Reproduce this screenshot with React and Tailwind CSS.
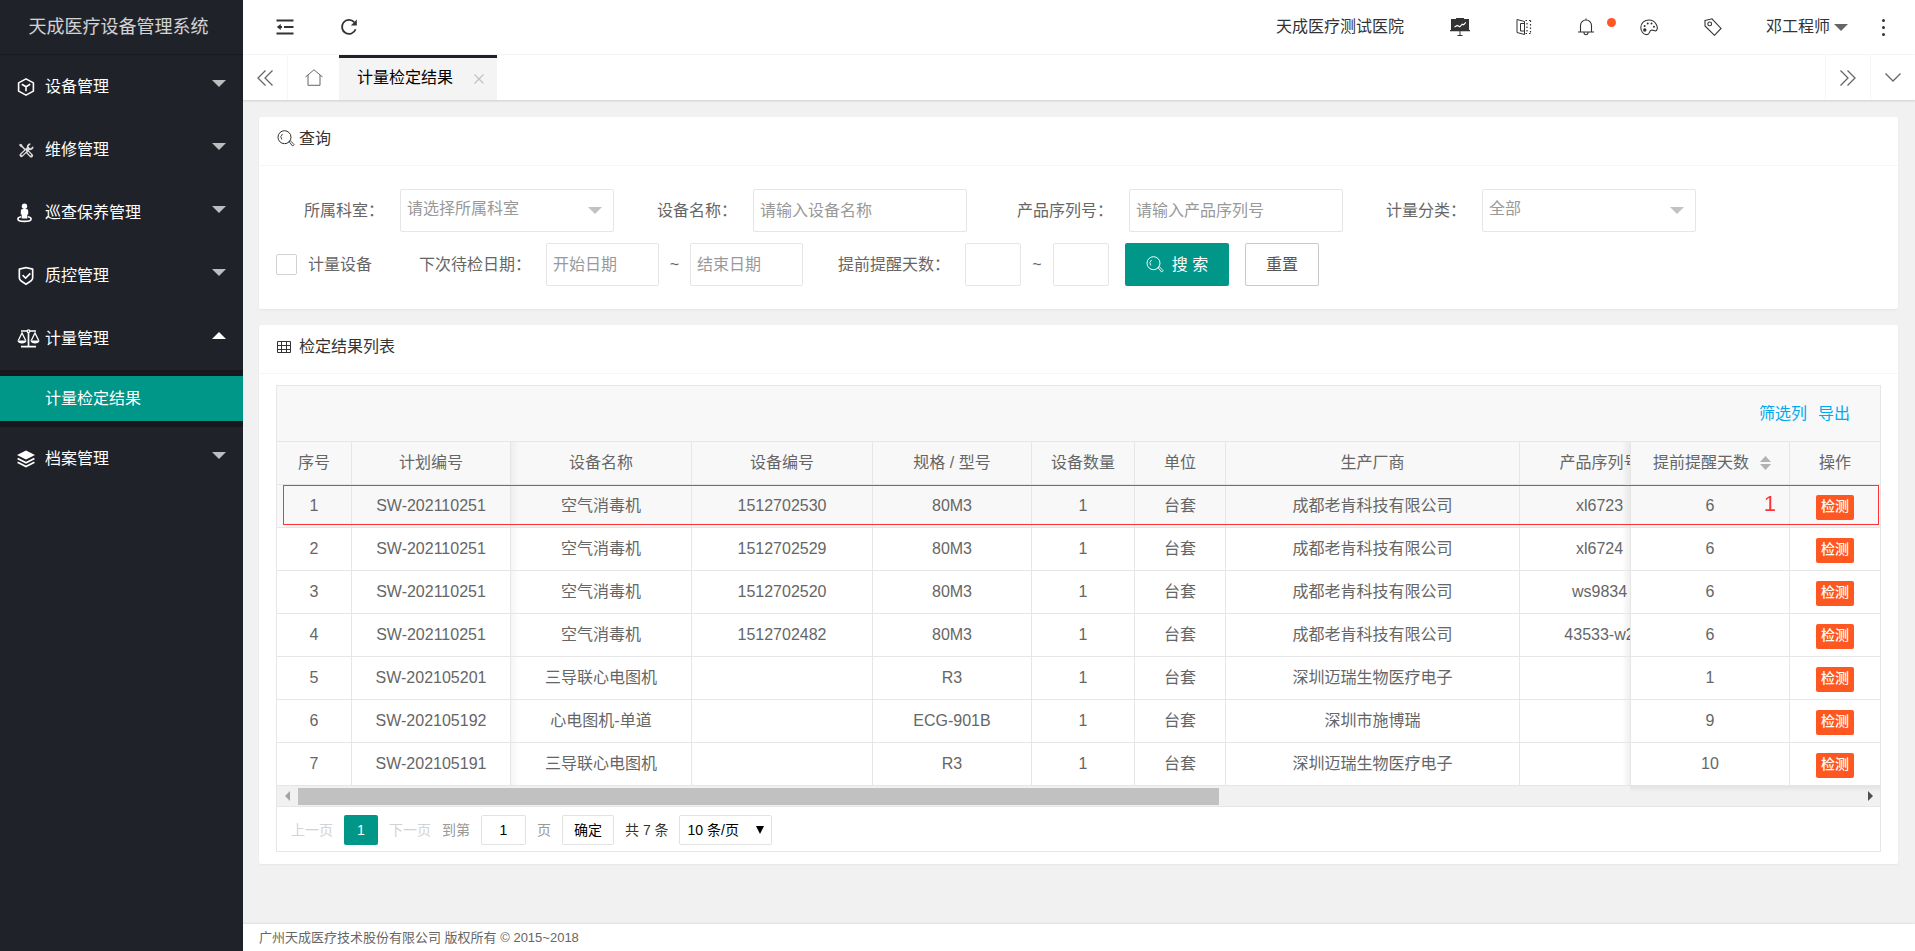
import { useState } from "react";
import clsx from "clsx";
import { RiShieldCheckLine } from "react-icons/ri";

const MENUS = [
  { title: "设备管理", icon: CubeIcon },
  { title: "维修管理", icon: ToolsIcon },
  { title: "巡查保养管理", icon: PatrolIcon },
  { title: "质控管理", icon: ShieldIcon },
  { title: "计量管理", icon: ScaleIcon, children: ["计量检定结果"] },
  { title: "档案管理", icon: LayersIcon },
];

const ROWS = [
  { plan: "SW-202110251", name: "空气消毒机", code: "1512702530", model: "80M3", maker: "成都老肯科技有限公司", serial: "xl6723", days: 6 },
  { plan: "SW-202110251", name: "空气消毒机", code: "1512702529", model: "80M3", maker: "成都老肯科技有限公司", serial: "xl6724", days: 6 },
  { plan: "SW-202110251", name: "空气消毒机", code: "1512702520", model: "80M3", maker: "成都老肯科技有限公司", serial: "ws9834", days: 6 },
  { plan: "SW-202110251", name: "空气消毒机", code: "1512702482", model: "80M3", maker: "成都老肯科技有限公司", serial: "43533-w2", days: 6 },
  { plan: "SW-202105201", name: "三导联心电图机", code: "", model: "R3", maker: "深圳迈瑞生物医疗电子", serial: "", days: 1 },
  { plan: "SW-202105192", name: "心电图机-单道", code: "", model: "ECG-901B", maker: "深圳市施博瑞", serial: "", days: 9 },
  { plan: "SW-202105191", name: "三导联心电图机", code: "", model: "R3", maker: "深圳迈瑞生物医疗电子", serial: "", days: 10 },
];

/* ---------- icons ---------- */

function CubeIcon() {
  return (
    <svg width="18" height="18" viewBox="0 0 18 18" fill="none" stroke="currentColor" strokeWidth="1.6" strokeLinejoin="round">
      <path d="M9 .9 16.4 4.9v8.2L9 17.1 1.6 13.1V4.9z" />
      <path d="M4.8 6.3 9 8.8l4.2-2.5M9 8.800v4.400" />
    </svg>
  );
}

function ToolsIcon() {
  return (
    <svg width="18" height="18" viewBox="0 0 18 18" fill="none" stroke="#ddd">
      <path d="M3.4 3.900 8.500 9" strokeWidth="1.5" />
      <path d="M2.500 2.800 5 3.600 5.600 5.800 4.200 6.200 2.300 4.600z" fill="#ddd" stroke="none" />
      <path d="m10.600 11 3.600 3.600" strokeWidth="3.800" strokeLinecap="round" />
      <path d="m10.800 11.200 3.200 3.200" stroke="#20222A" strokeWidth="1.200" />
      <path d="m4.400 14.200 6.600-6.400" strokeWidth="3.800" strokeLinecap="round" />
      <path d="m4.600 14 4.400-4.200" stroke="#20222A" strokeWidth="1.200" />
      <path d="M13.300 3.200A2.600 2.600 0 0 0 11 7a2.600 2.600 0 0 0 4.800-1.200" strokeWidth="1.800" />
    </svg>
  );
}

function PatrolIcon() {
  return (
    <svg width="16" height="20" viewBox="0 0 16 20" fill="currentColor">
      <circle cx="7.500" cy="3.200" r="2.700" />
      <path d="M3.800 7.800Q3.800 6 5.600 6h3.800q1.800 0 1.800 1.800V11.500H10.300V15.500H4.700V11.500H3.800z" />
      <path d="M4.200 13.800C2 14.200.9 15 .9 15.900c0 1.500 3 2.500 6.600 2.500s6.600-1 6.600-2.500c0-.9-1.100-1.700-3.300-2.100" fill="none" stroke="currentColor" strokeWidth="1.600" />
    </svg>
  );
}

function ShieldIcon() {
  return <RiShieldCheckLine size={20} className="-mx-px" />;
}

function ScaleIcon() {
  return (
    <svg width="23" height="19" viewBox="0 0 23 19" fill="none" stroke="currentColor" strokeWidth="1.3">
      <path d="M4 2h15M11.500 2v15M4 17.600h15" strokeWidth="1.700" />
      <circle cx="11.500" cy="2.200" r="1.300" fill="#20222A" />
      <path d="M1.300 11.500 5 4l3.700 7.500M14.300 11.500 18 4l3.700 7.500" />
      <path d="M.4 11.500h9.200c-.3 2-2.200 3-4.600 3s-4.300-1-4.600-3zM13.400 11.500h9.200c-.3 2-2.200 3-4.600 3s-4.300-1-4.600-3z" fill="currentColor" stroke="none" />
    </svg>
  );
}

function LayersIcon() {
  return (
    <svg width="18" height="18" viewBox="0 0 18 18" fill="currentColor">
      <path d="M9 .6 18 5 9 9.500 0 5z" />
      <path d="m.6 8.500 8.400 4.200 8.400-4.200M.6 12.300 9 16.500l8.400-4.200" fill="none" stroke="currentColor" strokeWidth="1.800" />
    </svg>
  );
}

function FoldIcon() {
  return (
    <svg width="18" height="16" viewBox="0 0 18 16" fill="none" stroke="currentColor" strokeWidth="1.800">
      <path d="M.5 1.500h17M8 8h9.500M.5 14.500h17M2.500 8H6" />
      <path d="M.8 8l4-3v6z" fill="currentColor" stroke="none" />
    </svg>
  );
}

function RefreshIcon() {
  return (
    <svg width="18" height="18" viewBox="0 0 18 18" fill="none" stroke="currentColor" strokeWidth="1.800">
      <path d="M15.600 11.300A7 7 0 1 1 14.200 4.200" />
      <path d="M16.800 1.400v6h-6z" fill="currentColor" stroke="none" />
    </svg>
  );
}

function BoardIcon() {
  return (
    <svg width="20" height="18" viewBox="0 0 20 18" fill="currentColor">
      <path d="M6 0h8v1h5v11h1v1.200H0V12h1V1h5z" />
      <path d="M4.500 9 7.200 7.400l2.600 1.400 2.400-2.600 1.400.6 2.200-2.400" fill="none" stroke="#fff" strokeWidth="1.200" />
      <path d="M10 13v4.500M7.500 17.500h5" fill="none" stroke="currentColor" />
    </svg>
  );
}

function BookIcon() {
  return (
    <svg width="16" height="18" viewBox="0 0 16 18" fill="none" stroke="currentColor">
      <path d="M8.500 3.500 1 1.500v13l7.500 2zM8.500 5.500h-4v7.500h4" />
      <path d="M9.500 2.500h5.500M9.500 15.500h5.500M11 5v9M14.500 2.500v13" strokeDasharray="1.500 2" strokeWidth="1.200" />
    </svg>
  );
}

function BellIcon() {
  return (
    <svg width="16" height="18" viewBox="0 0 16 18" fill="none" stroke="currentColor" strokeWidth="1.100">
      <path d="M2.500 14V7.500a5.500 5.500 0 0 1 11 0V14M0 14h16M8 2V.500M6 14.500c0 3 4 3 4 0" />
    </svg>
  );
}

function PaletteIcon() {
  return (
    <svg width="18" height="17" viewBox="0 0 18 17" fill="none" stroke="currentColor" strokeWidth="1.100">
      <path d="M9 1C4.300 1 .8 4.300.8 8.400c0 4 2.600 7.200 5.900 7.200 3.400 0 2.200-3.300 4.400-4.300 2-.9 3.800 1.500 5.300.2C18.600 9.400 16.400 1 9 1z" />
      <g fill="currentColor" stroke="none">
        <circle cx="4.800" cy="11" r="1.700" />
        <circle cx="4.600" cy="6.900" r="1" />
        <circle cx="7.700" cy="4.400" r="1" />
        <circle cx="11.500" cy="4.500" r="1" />
        <circle cx="14" cy="7.700" r="1" />
      </g>
    </svg>
  );
}

function TagIcon() {
  return (
    <svg width="18" height="18" viewBox="0 0 18 18" fill="none" stroke="currentColor" strokeWidth="1.100">
      <path d="M1 2.500 8 .8l9 9.700-6.500 6.800L1 8z" />
      <circle cx="5.700" cy="5.900" r="1.900" />
    </svg>
  );
}

function SearchIcon() {
  return (
    <svg width="18" height="18" viewBox="0 0 18 18" fill="none" stroke="currentColor">
      <circle cx="7.500" cy="7.200" r="6.500" />
      <path d="M5.600 3.900a4 4 0 0 0-.8 5.600M12 11.600l1.200-1.100 3.900 4.100-1.400 1.500z" strokeWidth=".9" />
    </svg>
  );
}

function GridIcon() {
  return (
    <svg width="14" height="12" viewBox="0 0 14 12" fill="none" stroke="currentColor">
      <path d="M.5.5h13v11H.5zM0 4.500h14M0 8.500h14M4.500 0v12M9.500 0v12" />
    </svg>
  );
}

function DoubleChevron({ flip }) {
  return (
    <svg width="16" height="16" viewBox="0 0 16 16" fill="none" stroke="currentColor" strokeWidth="1.300" className={clsx(flip && "rotate-180")}>
      <path d="M8.500.5 1 8l7.500 7.500M15.500.5 8 8l7.500 7.500" />
    </svg>
  );
}

function Caret({ up, className }) {
  return (
    <svg width="14" height="7" viewBox="0 0 14 7" fill="currentColor" className={clsx(up && "rotate-180", className)}>
      <path d="M0 0h14L7 7z" />
    </svg>
  );
}

/* ---------- layout ---------- */

function Sidebar() {
  return (
    <aside className="w-[243px] shrink-0 bg-[#20222A] text-white">
      <div className="flex h-[55px] items-center justify-center border-b border-black/20 pr-1.5 text-lg text-white/80">
        天成医疗设备管理系统
      </div>
      <nav>
        {MENUS.map(({ title, icon: Icon, children }) => (
          <div key={title}>
            <button type="button" className="flex h-[63px] w-full items-center pl-[17px] pr-[17px] text-left">
              <span className="flex w-[28px] shrink-0">
                <Icon />
              </span>
              <span className="flex-1">{title}</span>
              <Caret up={!!children} className={clsx("mb-1.5", children ? "text-white" : "text-white/70")} />
            </button>
            {children && (
              <div className="bg-[#17181E] py-1.5">
                {children.map((child) => (
                  <a key={child} href="#" className="flex h-[45px] items-center bg-[#009688] pl-[45px]">
                    {child}
                  </a>
                ))}
              </div>
            )}
          </div>
        ))}
      </nav>
    </aside>
  );
}

function Header() {
  return (
    <header className="flex h-[55px] items-center justify-between border-b border-[#f6f6f6] bg-white pl-[33px] pr-[30px] text-[#333]">
      <div className="flex items-center gap-[46px]">
        <button type="button" aria-label="侧边伸缩"><FoldIcon /></button>
        <button type="button" aria-label="刷新"><RefreshIcon /></button>
      </div>
      <div className="flex items-center">
        <a href="#" className="mr-[46px]">天成医疗测试医院</a>
        <div className="mr-[44px] flex items-center gap-[46px]">
          <button type="button" aria-label="大屏"><BoardIcon /></button>
          <button type="button" aria-label="手册"><BookIcon /></button>
          <button type="button" aria-label="消息" className="relative">
            <BellIcon />
            <span className="absolute -right-[22px] top-0 size-[9px] rounded-full bg-[#FF5722]" />
          </button>
          <button type="button" aria-label="主题"><PaletteIcon /></button>
          <button type="button" aria-label="便签"><TagIcon /></button>
        </div>
        <button type="button" className="flex items-center gap-1">
          邓工程师
          <Caret className="text-[#666]" />
        </button>
        <button type="button" aria-label="更多" className="ml-[34px] flex flex-col gap-1">
          <span className="size-[3px] rounded-full bg-[#333]" />
          <span className="size-[3px] rounded-full bg-[#333]" />
          <span className="size-[3px] rounded-full bg-[#333]" />
        </button>
      </div>
    </header>
  );
}

function Tabs() {
  return (
    <div className="relative flex h-[45px] bg-white text-[#666] shadow-[0_1px_2px_rgba(0,0,0,0.15)]">
      <button type="button" aria-label="向左" className="flex w-[45px] items-center justify-center border-r border-[#f6f6f6]">
        <DoubleChevron />
      </button>
      <button type="button" aria-label="首页" className="flex w-[51px] items-center justify-center">
        <svg width="18" height="17" viewBox="0 0 18 17" fill="none" stroke="currentColor">
          <path d="M.5 8 9 .8 17.500 8M3 6v10.300h12V6" />
        </svg>
      </button>
      <div className="flex w-[158px] items-center border-t-[3px] border-[#20222A] bg-[#f4f4f4] pl-[18px] text-black">
        <span className="pb-0.5">计量检定结果</span>
        <button type="button" aria-label="关闭" className="ml-[21px] text-[#c2c2c2]">
          <svg width="10" height="10" viewBox="0 0 10 10" fill="none" stroke="currentColor" strokeWidth="1.200">
            <path d="m.5.5 9 9m0-9-9 9" />
          </svg>
        </button>
      </div>
      <button type="button" aria-label="向右" className="ml-auto flex w-[45px] items-center justify-center border-l border-[#f6f6f6]">
        <DoubleChevron flip />
      </button>
      <button type="button" aria-label="标签操作" className="flex w-[45px] items-center justify-center border-l border-[#f6f6f6]">
        <svg width="16" height="9" viewBox="0 0 16 9" fill="none" stroke="currentColor" strokeWidth="1.300">
          <path d="m.5.5 7.500 7.500L15.500.5" />
        </svg>
      </button>
    </div>
  );
}

function Card({ icon, title, children }) {
  return (
    <section className="rounded-xs bg-white shadow-[0_1px_2px_rgba(0,0,0,0.05)]">
      <h2 className="flex h-[49px] items-center border-b border-[#f6f6f6] px-[18px] pb-1 text-[#333]">
        <span className="flex w-[22px]">{icon}</span>
        {title}
      </h2>
      {children}
    </section>
  );
}

const INPUT = "h-[43px] rounded-xs border border-[#e6e6e6] bg-white px-[6px] text-[#666] placeholder:text-[#999] outline-none";

function SelectField({ id, options }) {
  return (
    <div className="relative w-[214px]">
      <select id={id} className={clsx(INPUT, "w-full appearance-none pb-1 text-[#999]")}>
        {options.map((o) => (
          <option key={o}>{o}</option>
        ))}
      </select>
      <Caret className="pointer-events-none absolute right-3 top-[18px] text-[#c2c2c2]" />
    </div>
  );
}

function SearchForm() {
  return (
    <form className="px-[17px] pb-[23px] pt-[23px]" onSubmit={(e) => e.preventDefault()}>
      <div className="flex flex-wrap items-center gap-y-[11px]">
        <label htmlFor="dept" className="w-[124px] pl-[28px]">所属科室：</label>
        <SelectField id="dept" options={["请选择所属科室"]} />
        <label htmlFor="name" className="w-[139px] pl-[43px]">设备名称：</label>
        <input id="name" placeholder="请输入设备名称" className={clsx(INPUT, "w-[214px]")} />
        <label htmlFor="serial" className="w-[162px] pl-[50px]">产品序列号：</label>
        <input id="serial" placeholder="请输入产品序列号" className={clsx(INPUT, "w-[214px]")} />
        <label htmlFor="kind" className="w-[139px] pl-[43px]">计量分类：</label>
        <SelectField id="kind" options={["全部"]} />
      </div>
      <div className="mt-[11px] flex flex-wrap items-center">
        <label className="flex items-center gap-[11px]">
          <input type="checkbox" className="size-[21px] appearance-none rounded-xs border border-[#d2d2d2] bg-white" />
          计量设备
        </label>
        <label htmlFor="from" className="w-[174px] pl-[47px]">下次待检日期：</label>
        <input id="from" placeholder="开始日期" className={clsx(INPUT, "w-[113px]")} />
        <span className="w-[31px] text-center">~</span>
        <input aria-label="结束日期" placeholder="结束日期" className={clsx(INPUT, "w-[113px]")} />
        <label htmlFor="min" className="w-[162px] pl-[35px]">提前提醒天数：</label>
        <input id="min" className={clsx(INPUT, "w-[56px]")} />
        <span className="w-[32px] text-center">~</span>
        <input aria-label="最大提醒天数" className={clsx(INPUT, "w-[56px]")} />
        <button type="submit" className="ml-4 flex h-[43px] w-[104px] items-center justify-center gap-2 rounded-xs bg-[#009688] text-white">
          <SearchIcon />
          搜 索
        </button>
        <button type="reset" className="ml-4 h-[43px] w-[74px] rounded-xs border border-[#c9c9c9] bg-white text-[#555]">
          重置
        </button>
      </div>
    </form>
  );
}

const CELL = "h-[43px] overflow-hidden whitespace-nowrap border-b border-r border-[#e6e6e6] text-center font-normal";
const LEFT_EDGE = "after:absolute after:inset-y-0 after:-right-[9px] after:w-2 after:bg-linear-to-r after:from-black/4 after:to-transparent";
const RIGHT_EDGE = "border-l before:absolute before:inset-y-0 before:-left-[9px] before:w-2 before:bg-linear-to-l before:from-black/6 before:to-transparent";

function ResultTable() {
  return (
    <div className="overflow-hidden">
      <table className="w-full min-w-[1653px] table-fixed border-separate border-spacing-0">
        <colgroup>
          <col className="w-[75px]" />
          <col className="w-[159px]" />
          <col className="w-[181px]" />
          <col className="w-[181px]" />
          <col className="w-[159px]" />
          <col className="w-[103px]" />
          <col className="w-[91px]" />
          <col className="w-[294px]" />
          <col className="w-[160px]" />
          <col className="w-[160px]" />
          <col className="w-[90px]" />
        </colgroup>
        <thead>
          <tr className="bg-[#f8f8f8]">
            <th className={clsx(CELL, "sticky left-0 z-10 bg-[#f8f8f8]")}>序号</th>
            <th className={clsx(CELL, LEFT_EDGE, "sticky left-[75px] z-10 overflow-visible bg-[#f8f8f8]")}>计划编号</th>
            <th className={CELL}>设备名称</th>
            <th className={CELL}>设备编号</th>
            <th className={CELL}>规格 / 型号</th>
            <th className={CELL}>设备数量</th>
            <th className={CELL}>单位</th>
            <th className={CELL}>生产厂商</th>
            <th className={CELL}>产品序列号</th>
            <th className={clsx(CELL, RIGHT_EDGE, "sticky right-[90px] z-10 overflow-visible bg-[#f8f8f8]")}>
              <span className="flex items-center justify-center gap-[11px] pl-1">
                提前提醒天数
                <svg width="11" height="14" viewBox="0 0 11 14" fill="#b2b2b2">
                  <path d="M5.500 0 11 6H0zM0 8h11l-5.500 6z" />
                </svg>
              </span>
            </th>
            <th className={clsx(CELL, "sticky right-0 z-10 border-r-0 bg-[#f8f8f8]")}>操作</th>
          </tr>
        </thead>
        <tbody>
          {ROWS.map((row, i) => {
            const bg = i === 0 ? "bg-[#f8f8f8]" : "bg-white";
            return (
              <tr key={i} className={bg}>
                <td className={clsx(CELL, bg, "sticky left-0 z-10")}>{i + 1}</td>
                <td className={clsx(CELL, LEFT_EDGE, bg, "sticky left-[75px] z-10 overflow-visible")}>{row.plan}</td>
                <td className={CELL}>{row.name}</td>
                <td className={CELL}>{row.code}</td>
                <td className={CELL}>{row.model}</td>
                <td className={CELL}>1</td>
                <td className={CELL}>台套</td>
                <td className={CELL}>{row.maker}</td>
                <td className={CELL}>{row.serial}</td>
                <td className={clsx(CELL, RIGHT_EDGE, bg, "sticky right-[90px] z-10 overflow-visible")}>{row.days}</td>
                <td className={clsx(CELL, bg, "sticky right-0 z-10 border-r-0")}>
                  <div className="flex justify-center pt-0.5">
                    <button type="button" className="h-[25px] w-[38px] rounded-xs bg-[#FF5722] pb-0.5 text-sm leading-5 font-medium text-white">
                      检测
                    </button>
                  </div>
                </td>
              </tr>
            );
          })}
        </tbody>
      </table>
    </div>
  );
}

function ScrollBar() {
  return (
    <div className="relative flex h-[21px] items-center border-b border-[#e6e6e6] bg-[#f1f1f1]">
      <svg width="21" height="10" viewBox="0 0 21 10" fill="#a3a3a3"><path d="M13 0v10L8 5z" /></svg>
      <div className="flex-1">
        <div className="h-[17px] w-[59%] bg-[#c1c1c1]" />
      </div>
      <svg width="21" height="10" viewBox="0 0 21 10" fill="#505050"><path d="M9 0v10l5-5z" /></svg>
      <div className="absolute right-0 top-0 h-1.5 w-[250px] bg-linear-to-b from-black/6 to-transparent" />
    </div>
  );
}

function Pager() {
  const [page, setPage] = useState("1");
  return (
    <div className="flex h-[44px] items-center pl-[14px] pt-0.5 text-sm text-[#999]">
      <button type="button" disabled className="text-[#d2d2d2]">上一页</button>
      <span className="mx-[11px] flex h-[30px] w-[34px] items-center justify-center rounded-xs bg-[#009688] text-white">1</span>
      <button type="button" disabled className="text-[#d2d2d2]">下一页</button>
      <label htmlFor="page" className="ml-[11px]">到第</label>
      <input
        id="page"
        value={page}
        onChange={(e) => setPage(e.target.value)}
        className="mx-[11px] h-[30px] w-[45px] rounded-xs border border-[#e2e2e2] text-center text-black"
      />
      <span>页</span>
      <button type="button" className="mx-[11px] h-[30px] w-[52px] rounded-xs border border-[#e2e2e2] text-black">确定</button>
      <span className="text-[#333]">共 7 条</span>
      <div className="relative ml-[10px]">
        <select aria-label="每页条数" className="h-[30px] w-[93px] appearance-none rounded-xs border border-[#e2e2e2] pl-2 text-black">
          <option>10 条/页</option>
        </select>
        <svg width="8" height="8" viewBox="0 0 8 8" className="pointer-events-none absolute right-2 top-[11px]"><path d="M0 0h8L4 8z" /></svg>
      </div>
    </div>
  );
}

export default function App() {
  return (
    <div className="flex min-h-screen bg-[#f1f1f1] font-['Liberation_Sans','Noto_Sans_CJK_SC',sans-serif] text-base text-[#666]">
      <Sidebar />
      <div className="flex min-w-0 flex-1 flex-col">
        <Header />
        <Tabs />
        <main className="flex flex-1 flex-col gap-4 py-[17px] pl-4 pr-[17px]">
          <Card icon={<SearchIcon />} title="查询">
            <SearchForm />
          </Card>
          <Card icon={<GridIcon />} title="检定结果列表">
            <div className="px-[17px] pb-[12px] pt-[11px]">
              <div className="border border-[#e6e6e6]">
                <div className="flex h-[56px] items-center justify-end gap-[11px] border-b border-[#e6e6e6] bg-[#f8f8f8] pr-[30px] text-[#01AAED]">
                  <a href="#">筛选列</a>
                  <a href="#">导出</a>
                </div>
                <div className="relative">
                  <ResultTable />
                  {/* row callout */}
                  <div className="pointer-events-none absolute left-1.5 right-px top-[43px] z-20 flex h-[40px] items-center justify-end border border-[#ff3333] pr-[102px] pb-1 text-[22px] text-[#ff3333]">
                    1
                  </div>
                </div>
                <ScrollBar />
                <Pager />
              </div>
            </div>
          </Card>
        </main>
        <footer className="flex h-[27px] items-center bg-white pl-4 text-[13px] shadow-[0_-1px_2px_rgba(0,0,0,0.08)]">
          广州天成医疗技术股份有限公司 版权所有 © 2015~2018
        </footer>
      </div>
    </div>
  );
}
